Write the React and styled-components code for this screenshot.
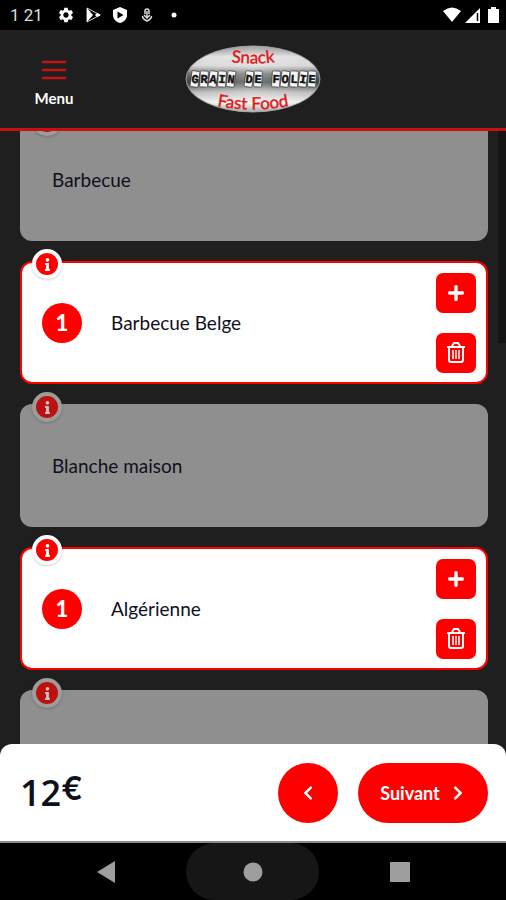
import { useState } from "react";
import styled, { createGlobalStyle } from "styled-components";
import { FaInfo, FaPlus, FaChevronLeft, FaChevronRight } from "react-icons/fa";
import { MdSettings } from "react-icons/md";

const GlobalStyle = createGlobalStyle`
	* {
		box-sizing: border-box;
	}
	body {
		margin: 0;
		background: #1f1f1f;
		font-family: Lato, "Open Sans", sans-serif;
		color: #10101c;
	}
	button {
		font-family: inherit;
		border: 0;
		padding: 0;
		cursor: pointer;
	}
`;

const Screen = styled.div`
	display: flex;
	flex-direction: column;
	height: 100vh;
	overflow: hidden;
`;

const StatusBar = styled.div`
	display: flex;
	align-items: center;
	justify-content: space-between;
	flex: none;
	height: 30px;
	padding: 0 4px 0 10px;
	background: #000;
	color: #fff;
`;

const StatusGroup = styled.div`
	display: flex;
	align-items: center;
	gap: ${(props) => props.$gap}px;
`;

const Clock = styled.span`
	font: 17px Roboto, sans-serif;
	color: #ddd;
	margin-right: 5px;
`;

const Header = styled.header`
	display: grid;
	grid-template-columns: 1fr auto 1fr;
	align-items: center;
	flex: none;
	height: 101px;
	background: #1f1f1f;
	border-bottom: 3px solid #c90f0f;
	position: relative;
	z-index: 1;
`;

const MenuButton = styled.button`
	display: flex;
	flex-direction: column;
	align-items: center;
	gap: 8px;
	width: 108px;
	padding-top: 9px;
	background: none;
	color: #fff;
	font-size: 15px;
	line-height: 20px;
	font-weight: bold;
`;

const List = styled.main`
	flex: 1;
	min-height: 0;
	overflow: hidden;
	position: relative;
	margin-top: -13px;
	padding: 0 18px 0 20px;
`;

const ScrollThumb = styled.div`
	position: absolute;
	top: 0;
	right: 0;
	width: 8px;
	height: 225px;
	background: #141414;
`;

const Card = styled.article`
	position: relative;
	display: flex;
	align-items: center;
	height: 123px;
	margin-bottom: 20px;
	border-radius: 12px;
	font-size: 19px;
	line-height: 24px;
	padding: 0 32px;
	background: #8f8f8f;
	${(props) => props.$selected && `
		background: #fff;
		border: 2px solid #f00;
		padding: 0 10px 0 20px;
	`}
`;

const InfoButton = styled.button`
	position: absolute;
	left: ${(props) => props.$selected ? 10 : 12}px;
	top: ${(props) => props.$selected ? -14 : -12}px;
	display: flex;
	align-items: center;
	justify-content: center;
	width: 30px;
	height: 30px;
	border-radius: 50%;
	border: 4px solid ${(props) => props.$selected ? "#fff" : "#9c9c9c"};
	background: ${(props) => props.$selected ? "#f00" : "#bd1010"};
	color: ${(props) => props.$selected ? "#fff" : "#c4c4c4"};
	box-shadow: 0 1px 3px rgba(0, 0, 0, 0.2);
`;

const Count = styled.span`
	display: flex;
	align-items: center;
	justify-content: center;
	width: 40px;
	height: 40px;
	margin-right: 29px;
	border-radius: 50%;
	background: #f00;
	color: #fff;
	font-size: 22px;
	font-weight: 900;
`;

const Name = styled.span`
	flex: 1;
`;

const CardActions = styled.div`
	display: flex;
	flex-direction: column;
	gap: 20px;
`;

const SquareButton = styled.button`
	display: flex;
	align-items: center;
	justify-content: center;
	width: 40px;
	height: 40px;
	border-radius: 7px;
	background: #f00;
	color: #fff;
`;

const Footer = styled.footer`
	display: flex;
	align-items: center;
	gap: 20px;
	flex: none;
	height: 99px;
	margin-top: -12px;
	padding: 0 18px 0 20px;
	position: relative;
	background: #fff;
	border-bottom: 2px solid #8a8a8a;
	border-radius: 12px 12px 0 0;
`;

const Price = styled.div`
	display: flex;
	align-items: flex-start;
	flex: 1;
	font: 600 36px/40px "Open Sans", sans-serif;
`;

const Currency = styled.span`
	font: 600 32px/32px Inter, sans-serif;
`;

const RoundButton = styled.button`
	display: flex;
	align-items: center;
	justify-content: center;
	gap: 10px;
	width: ${(props) => props.$wide ? 130 : 60}px;
	height: 60px;
	border-radius: 30px;
	background: #f00;
	color: #fff;
	font-size: 18px;
	font-weight: bold;
`;

const NavBar = styled.nav`
	display: grid;
	grid-template-columns: repeat(3, 1fr);
	justify-items: center;
	flex: none;
	height: 57px;
	padding: 0 33px;
	background: #000;
`;

const NavButton = styled.button`
	display: flex;
	align-items: center;
	justify-content: center;
	width: 133px;
	border-radius: 29px;
	background: ${(props) => props.$active ? "#161616" : "none"};
`;

function Logo() {
	const tiles = [..."GRAIN DE FOLIE"];
	return <svg width="136" height="70" viewBox="0 0 136 70" role="img" aria-label="Snack Grain de Folie">
		<defs>
			<linearGradient id="metal" x1="0" y1="0" x2="0" y2="1">
				<stop offset="0" stopColor="#777"/>
				<stop offset="0.16" stopColor="#ddd"/>
				<stop offset="0.3" stopColor="#d6d6d6"/>
				<stop offset="0.42" stopColor="#6a6c6c"/>
				<stop offset="0.55" stopColor="#3c4040"/>
				<stop offset="0.7" stopColor="#bbb"/>
				<stop offset="0.86" stopColor="#f2f2f2"/>
				<stop offset="1" stopColor="#888"/>
			</linearGradient>
			<linearGradient id="shine">
				<stop offset="0" stopColor="#fff" stopOpacity="0"/>
				<stop offset="0.5" stopColor="#fff" stopOpacity="0.3"/>
				<stop offset="1" stopColor="#fff" stopOpacity="0"/>
			</linearGradient>
			<path id="topArc" d="M38 17 Q68 22 98 17"/>
			<path id="bottomArc" d="M26 61 Q68 70 110 61"/>
		</defs>
		<ellipse cx="68" cy="35" rx="67" ry="33" fill="url(#metal)" stroke="#999"/>
		<ellipse cx="68" cy="35" rx="67" ry="33" fill="url(#shine)"/>
		<g fill="#e01818" stroke="#e01818" strokeWidth="0.4" fontFamily="Lato, sans-serif" fontSize="17" textAnchor="middle">
			<text><textPath href="#topArc" startOffset="50%">Snack</textPath></text>
			<text><textPath href="#bottomArc" startOffset="50%">Fast Food</textPath></text>
		</g>
		{tiles.map((letter, i) => letter != " " &&
			<g key={i} transform={`translate(${10 + i * 9} 35) rotate(${i % 2 ? 3 : 8})`}>
				<rect x="-4" y="-8" width="8" height="16" rx="1" fill="#f4f4f4" stroke="#333" strokeWidth="0.7"/>
				<text y="4" textAnchor="middle" fontFamily="Liberation Mono, monospace" fontWeight="bold" fontSize="12" fill="#111" stroke="#111" strokeWidth="0.4">{letter}</text>
			</g>
		)}
	</svg>;
}

function Sauce({ name, initial }) {
	const [count, setCount] = useState(initial);
	const selected = count > 0;

	return <Card $selected={selected}>
		<InfoButton $selected={selected} aria-label="Info"><FaInfo size={13}/></InfoButton>
		{selected && <Count>{count}</Count>}
		<Name>{name}</Name>
		{selected && <CardActions>
			<SquareButton aria-label="Ajouter" onClick={() => setCount(count + 1)}><FaPlus size={18}/></SquareButton>
			<SquareButton aria-label="Supprimer" onClick={() => setCount(0)}>
				<svg width="18" height="22" viewBox="0 0 18 22" fill="none" stroke="#fff" strokeWidth="2">
					<path d="M0 5 H18 M5 4 L7 1 H11 L13 4 M2 5 V18 Q2 20 4 20 H14 Q16 20 16 18 V5"/>
					<path d="M6 8 V17 M9 8 V17 M12 8 V17" strokeWidth="1.500"/>
				</svg>
			</SquareButton>
		</CardActions>}
	</Card>;
}

function App() {
	return <Screen>
		<GlobalStyle/>
		<StatusBar>
			<StatusGroup $gap={9}>
				<Clock>1 21</Clock>
				<MdSettings size={18}/>
				<svg width="18" height="18" viewBox="0 0 18 18">
					<path d="M3 2 V16 L16 9 Z" fill="none" stroke="#ccc"/>
					<path d="M3 2 V16 L9 9 Z M13 7 L17 9 L13 11 L11 9 Z" fill="#fff"/>
				</svg>
				<svg width="18" height="18" viewBox="0 0 18 18">
					<path d="M9 1 L16 4 V9 C16 13 13 16 9 17 C5 16 2 13 2 9 V4 Z" fill="#fff"/>
					<path d="M6.500 5.500 L12.500 9 L6.500 12.500 Z" fill="#000"/>
				</svg>
				<svg width="18" height="18" viewBox="0 0 18 18" fill="none" stroke="#ddd" strokeWidth="1.500">
					<path d="M7 8 V5 A2 2 0 0 1 11 5 V8 M9 5 V12 M6 9 L9 12 L12 9 M4.500 10 C4.500 13 9 15 9 15 S13.500 13 13.500 10"/>
				</svg>
				<svg width="18" height="18" viewBox="0 0 18 18"><circle cx="9" cy="9" r="2.500" fill="#fff"/></svg>
			</StatusGroup>
			<StatusGroup $gap={2}>
				<svg width="20" height="18" viewBox="0 0 20 18"><path d="M1 5 Q10 -2 19 5 L10 16 Z" fill="#fff"/></svg>
				<svg width="18" height="18" viewBox="0 0 18 18">
					<path d="M1 17 L16 2 V17 Z" fill="#fff"/>
					<path d="M13.500 7 V15" stroke="#000" strokeWidth="1.500"/>
				</svg>
				<svg width="18" height="18" viewBox="0 0 18 18"><path d="M7 1 H12 V3 H15 V17 H4 V3 H7 Z" fill="#fff"/></svg>
			</StatusGroup>
		</StatusBar>
		<Header>
			<MenuButton>
				<svg width="24" height="20" viewBox="0 0 24 20" stroke="#c41414" strokeWidth="2.500">
					<path d="M0 2 H24 M0 10 H24 M0 18 H24"/>
				</svg>
				Menu
			</MenuButton>
			<Logo/>
		</Header>
		<List>
			<Sauce name="Barbecue" initial={0}/>
			<Sauce name="Barbecue Belge" initial={1}/>
			<Sauce name="Blanche maison" initial={0}/>
			<Sauce name="Algérienne" initial={1}/>
			<Sauce name="" initial={0}/>
			<ScrollThumb/>
		</List>
		<Footer>
			<Price>12<Currency>€</Currency></Price>
			<RoundButton aria-label="Retour"><FaChevronLeft size={16}/></RoundButton>
			<RoundButton $wide>Suivant <FaChevronRight size={16}/></RoundButton>
		</Footer>
		<NavBar>
			<NavButton aria-label="Back">
				<svg width="18" height="22" viewBox="0 0 18 22"><path d="M18 0 V22 L0 11 Z" fill="#9e9e9e"/></svg>
			</NavButton>
			<NavButton $active aria-label="Home">
				<svg width="20" height="20" viewBox="0 0 20 20"><circle cx="10" cy="10" r="9.500" fill="#9e9e9e"/></svg>
			</NavButton>
			<NavButton aria-label="Recent">
				<svg width="20" height="20" viewBox="0 0 20 20"><rect width="20" height="20" rx="1" fill="#9e9e9e"/></svg>
			</NavButton>
		</NavBar>
	</Screen>;
}

export default App;
